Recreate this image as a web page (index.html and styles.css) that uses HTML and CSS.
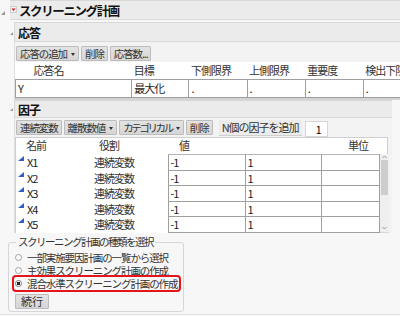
FILE: index.html
```html
<!DOCTYPE html>
<html lang="ja">
<head>
	<meta charset="utf-8">
	<title>スクリーニング計画</title>
	<link rel="stylesheet" href="styles.css">
</head>
<body>
	<div class="report">
		<div class="head title">
			<svg class="disc" width="10" height="20" viewBox="0 0 10 20"><polygon points="1,15 5,11 5,15" fill="#9a9a9a"/></svg>
			<div class="bar">
				<svg class="menu" width="7" height="7" viewBox="0 0 7 7"><rect x="0.5" y="0.5" width="6" height="6" fill="#f4f4f4" stroke="#d0d0d0"/><polygon points="1.5,2.5 5.5,2.5 3.5,5" fill="#e01010"/></svg>
				<span>スクリーニング計画</span>
			</div>
		</div>

		<div class="outline-body">
			<div class="head sub">
				<svg class="disc" width="4" height="20" viewBox="0 0 4 20"><polygon points="0,13 3,10 3,13" fill="#9a9a9a"/></svg>
				<div class="bar">応答</div>
			</div>
			<div class="sub-body responses-body">
				<div class="toolbar">
					<button class="btn drop">応答の追加</button>
					<button class="btn">削除</button>
					<button class="btn">応答数...</button>
				</div>
				<table class="grid responses">
					<colgroup>
						<col class="c-resp"><col class="c-goal"><col class="c-lim"><col class="c-lim"><col class="c-lim"><col class="c-lim">
					</colgroup>
					<thead>
						<tr><th class="resp-name">応答名</th><th>目標</th><th>下側限界</th><th>上側限界</th><th>重要度</th><th>検出下限</th></tr>
					</thead>
					<tbody>
						<tr><td>Y</td><td>最大化</td><td>.</td><td>.</td><td>.</td><td>.</td></tr>
					</tbody>
				</table>
			</div>

			<div class="head sub narrow">
				<svg class="disc" width="4" height="18" viewBox="0 0 4 18"><polygon points="0,11 3,8 3,11" fill="#9a9a9a"/></svg>
				<div class="bar">因子</div>
			</div>
			<div class="sub-body factors-body">
				<div class="toolbar">
					<button class="btn">連続変数</button>
					<button class="btn drop">離散数値</button>
					<button class="btn drop kana">カテゴリカル</button>
					<button class="btn">削除</button>
					<span class="add-label">N個の因子を追加</span>
					<input class="count" type="text" value="1">
				</div>
				<div class="ftable">
					<div class="fhead">
						<span class="h-name">名前</span>
						<span class="h-role">役割</span>
						<span class="h-val">値</span>
						<span class="h-unit">単位</span>
					</div>
					<div class="fbody">
						<table class="grid factors">
							<colgroup>
								<col class="c-name"><col class="c-role"><col class="c-val"><col class="c-val2"><col class="c-unit">
							</colgroup>
							<tbody>
								<tr><td class="fname"><i class="ftri"></i>X1</td><td class="frole">連続変数</td><td>-1</td><td>1</td><td></td></tr>
								<tr><td class="fname"><i class="ftri"></i>X2</td><td class="frole">連続変数</td><td>-1</td><td>1</td><td></td></tr>
								<tr><td class="fname"><i class="ftri"></i>X3</td><td class="frole">連続変数</td><td>-1</td><td>1</td><td></td></tr>
								<tr><td class="fname"><i class="ftri"></i>X4</td><td class="frole">連続変数</td><td>-1</td><td>1</td><td></td></tr>
								<tr><td class="fname"><i class="ftri"></i>X5</td><td class="frole">連続変数</td><td>-1</td><td>1</td><td></td></tr>
							</tbody>
						</table>
						<div class="vscroll">
							<svg width="9" height="6" viewBox="0 0 9 6"><polyline points="2.5,4 4.5,2 6.5,4" fill="none" stroke="#9a9a9a"/></svg>
							<div class="thumb"></div>
							<svg class="down" width="9" height="6" viewBox="0 0 9 6"><polyline points="2.5,2 4.5,4 6.5,2" fill="none" stroke="#9a9a9a"/></svg>
						</div>
					</div>
				</div>
			</div>
		</div>

		<fieldset class="design-type">
			<legend>スクリーニング計画の種類を選択</legend>
			<label class="opt"><input type="radio" name="kind">一部実施要因計画の一覧から選択</label>
			<label class="opt"><input type="radio" name="kind">主効果スクリーニング計画の作成</label>
			<label class="opt marked"><input type="radio" name="kind" checked>混合水準スクリーニング計画の作成</label>
			<button class="btn go">続行</button>
		</fieldset>
	</div>
</body>
</html>
```

FILE: styles.css
```css
* {
	box-sizing: border-box;
}

html,
body {
	margin: 0;
	padding: 0;
}

body {
	width: 400px;
	height: 316px;
	overflow: hidden;
	background-color: #f7f7f7;
	font-family: "Noto Sans CJK JP", "Noto Sans", sans-serif;
	font-size: 11px;
	letter-spacing: -1px;
	color: #222;
}

.report {
	height: 315px;
	border-bottom: 1px solid #e2e2e2;
}

/* outline headers */
.head {
	display: flex;
	align-items: stretch;
}

.head .disc {
	flex: none;
	display: block;
}

.head .bar {
	flex: 1;
	display: flex;
	align-items: center;
	background-color: #ebebeb;
	border-top: 1px solid #d8d8d8;
	border-bottom: 1px solid #d8d8d8;
	font-weight: bold;
	color: #111;
}

.title {
	height: 20px;
}

.title .bar {
	font-size: 12.5px;
	letter-spacing: -1.4px;
}

.title .menu {
	margin: 0 2px 1px 0;
}

.outline-body {
	padding-left: 10px;
}

.sub {
	height: 20px;
	margin-top: 2px;
}

.sub .bar {
	font-size: 12px;
	padding-left: 3px;
	border-left: 1px solid #d8d8d8;
}

.sub.narrow {
	height: 18px;
	margin-top: 0;
	margin-right: 8px;
}

.sub-body {
	margin-left: 4px;
	border-left: 1px solid #dedede;
	background-color: #f3f3f3;
	overflow: hidden;
}

.responses-body {
	height: 58px;
	border-bottom: 2px solid #d3d3d3;
}

.factors-body {
	margin-right: 8px;
	height: 115px;
}

/* buttons */
.toolbar {
	display: flex;
	align-items: flex-start;
	padding: 4px 0 1px 1px;
	gap: 2px;
}

.factors-body .toolbar {
	padding-top: 2px;
	padding-bottom: 0;
}

.btn {
	height: 15px;
	margin: 0;
	padding: 0 3px;
	border: 1px solid #bcbcbc;
	border-radius: 1px;
	background: linear-gradient(#e3e3e3, #d6d6d6);
	font-family: inherit;
	font-size: 10.5px;
	letter-spacing: -1.1px;
	line-height: 13px;
	color: #333;
}

.btn.kana {
	letter-spacing: -2.4px;
}

.btn.drop::after {
	content: '';
	display: inline-block;
	margin: 0 0 2px 4px;
	border-left: 2.5px solid transparent;
	border-right: 2.5px solid transparent;
	border-top: 3px solid #333;
}

.add-label {
	height: 16px;
	margin-left: 4px;
	padding: 0 3px;
	background-color: #ececec;
	border-bottom: 1px solid #d0d0d0;
	line-height: 15px;
	color: #333;
}

.count {
	width: 23px;
	height: 16px;
	margin: 1px 0 0 1px;
	padding: 0 5px 0 0;
	border: 1px solid #d6d6d6;
	font-family: inherit;
	font-size: 10.5px;
	text-align: right;
	background: #fff;
}

/* grids */
.grid {
	border-collapse: collapse;
	table-layout: fixed;
	background-color: #fff;
}

.grid th {
	height: 17px;
	padding: 0 2px;
	font-weight: normal;
	text-align: left;
	color: #333;
	white-space: nowrap;
	overflow: hidden;
}

.grid td {
	height: 18px;
	padding: 0 2px;
	border: 1px solid #9f9f9f;
	line-height: 15px;
}

.responses {
	width: 407px;
}

.responses .resp-name {
	padding-left: 18px;
}

.c-resp { width: 116px; }
.c-goal { width: 57px; }
.c-lim { width: 58px; }

.ftable {
	width: 373px;
	border: 1px solid #cfcfcf;
	border-bottom: none;
	background-color: #fff;
}

.fhead {
	display: flex;
	height: 16px;
	line-height: 15px;
	color: #333;
}

.h-name { width: 79px; padding-left: 10px; }
.h-role { width: 78px; padding-left: 4px; }
.h-val { width: 166px; padding-left: 6px; }
.h-unit { padding-left: 9px; }

.fbody {
	display: flex;
}

.factors {
	width: 363px;
}

.c-name { width: 75px; }
.c-role { width: 77px; }
.c-val { width: 77px; }
.c-val2 { width: 76px; }
.c-unit { width: 58px; }

.factors td {
	height: 15.5px;
	line-height: 14px;
}

.factors tr:first-child td {
	border-top-color: #b5b5b5;
}

.factors .fname,
.factors .frole {
	border: none;
}

.factors .fname {
	padding-left: 2px;
}

.factors .frole {
	padding-left: 3px;
	color: #333;
}

.ftri {
	display: inline-block;
	width: 0;
	height: 0;
	margin: 0 3px 0 0;
	vertical-align: 6px;
	border-left: 6px solid transparent;
	border-bottom: 5px solid #2f62c4;
}

.vscroll {
	width: 9px;
	display: flex;
	flex-direction: column;
	background-color: #efefef;
	border-bottom: 1px solid #d8d8d8;
}

.vscroll svg {
	display: block;
}

.vscroll .thumb {
	height: 35px;
	margin: 0 1px;
	background-color: #cdcdcd;
}

.vscroll .down {
	margin-top: auto;
	margin-bottom: 1px;
}

/* design choice */
.design-type {
	width: 176px;
	margin: 3px 0 0 8px;
	padding: 3px 0 2px 6px;
	border: 1px solid #d6d6d6;
	border-radius: 3px;
	color: #333;
}

.design-type legend {
	padding: 0 2px;
	margin-left: 1px;
	font-size: 10.5px;
	line-height: 12px;
	letter-spacing: -1.5px;
}

.opt {
	display: flex;
	align-items: center;
	height: 13px;
	font-size: 10.5px;
	letter-spacing: -1.1px;
	line-height: 13px;
}

.opt input {
	appearance: none;
	-webkit-appearance: none;
	width: 7px;
	height: 7px;
	margin: 0 5px 0 0;
	border: 1px solid #a0a0a0;
	border-radius: 50%;
	background-color: #fff;
}

.opt input:checked {
	background: radial-gradient(circle, #222 0 1.6px, #fff 2px);
	border-color: #777;
}

.opt.marked {
	position: relative;
	width: fit-content;
}

.opt.marked::after {
	content: '';
	position: absolute;
	left: -3px;
	right: -4px;
	top: -2px;
	bottom: -2px;
	border: 2px solid #e4141b;
	border-radius: 4px;
}

.btn.go {
	margin-top: 4px;
	padding: 0 5px;
	font-size: 11px;
	letter-spacing: 0;
}
```
